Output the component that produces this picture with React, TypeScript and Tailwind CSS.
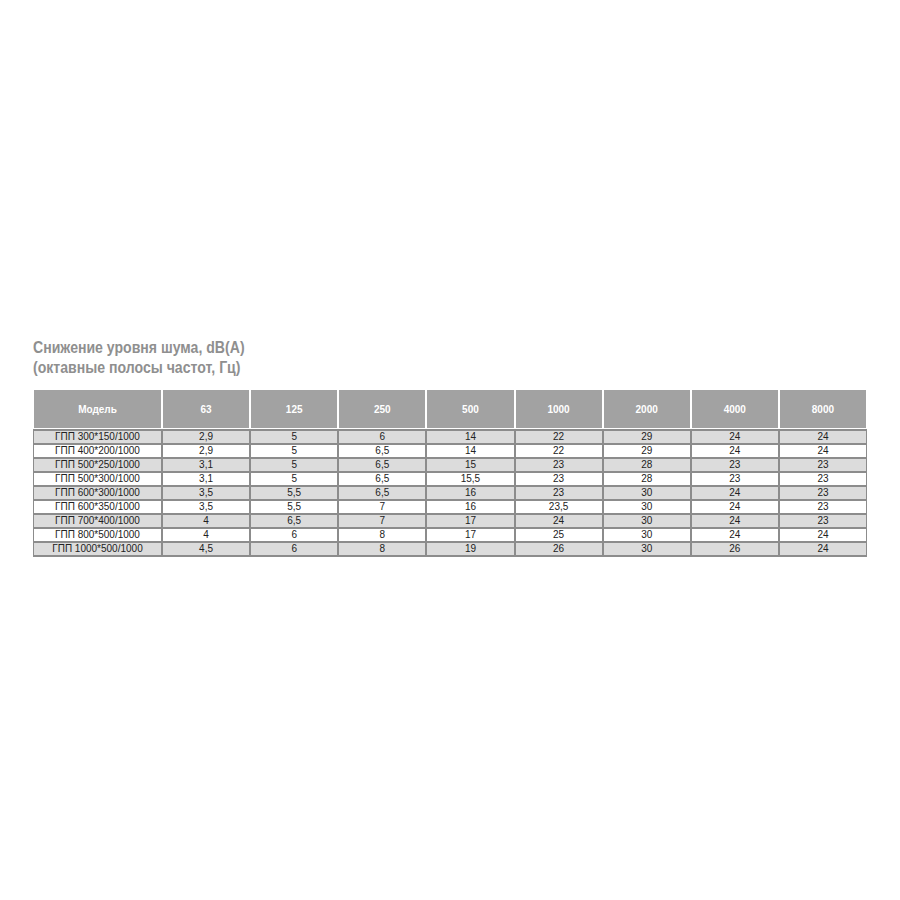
const freqs = ["63", "125", "250", "500", "1000", "2000", "4000", "8000"];

const rows: [string, string[]][] = [
  ["ГПП 300*150/1000", ["2,9", "5", "6", "14", "22", "29", "24", "24"]],
  ["ГПП 400*200/1000", ["2,9", "5", "6,5", "14", "22", "29", "24", "24"]],
  ["ГПП 500*250/1000", ["3,1", "5", "6,5", "15", "23", "28", "23", "23"]],
  ["ГПП 500*300/1000", ["3,1", "5", "6,5", "15,5", "23", "28", "23", "23"]],
  ["ГПП 600*300/1000", ["3,5", "5,5", "6,5", "16", "23", "30", "24", "23"]],
  ["ГПП 600*350/1000", ["3,5", "5,5", "7", "16", "23,5", "30", "24", "23"]],
  ["ГПП 700*400/1000", ["4", "6,5", "7", "17", "24", "30", "24", "23"]],
  ["ГПП 800*500/1000", ["4", "6", "8", "17", "25", "30", "24", "24"]],
  ["ГПП 1000*500/1000", ["4,5", "6", "8", "19", "26", "30", "26", "24"]],
];

export default function App() {
  return (
    <div className="min-h-[900px] w-[900px] bg-white pl-[33px] pt-[338px] font-['Liberation_Sans',Arial,sans-serif]">
      {/* the title in the picture is squeezed sideways */}
      <h2 className="origin-left scale-x-[0.88] text-[16px] font-bold leading-[20px] text-[#8f8f8f] whitespace-nowrap">
        Снижение уровня шума, dB(A)
        <br />
        (октавные полосы частот, Гц)
      </h2>

      <div className="mt-[12px] w-[834px]">
        <div className="grid grid-cols-[127px_repeat(8,1fr)] gap-x-[2px] px-[1px]">
          <div className="flex h-[38px] items-center justify-center bg-[#a2a2a2] text-[10px] font-bold text-white">
            Модель
          </div>
          {freqs.map((f) => (
            <div
              key={f}
              className="flex h-[38px] items-center justify-center bg-[#a2a2a2] text-[10px] font-bold text-white"
            >
              {f}
            </div>
          ))}
        </div>

        <div className="mt-[1px] grid grid-cols-[127px_repeat(8,1fr)] gap-[2px] bg-[#8c8c8c] p-[1px] py-[2px]">
          {rows.map(([model, vals], i) => {
            const bg = i % 2 === 0 ? "bg-[#dcdcdc]" : "bg-white";
            return [model, ...vals].map((v, j) => (
              <div
                key={model + j}
                className={`${bg} h-[12px] text-center text-[10px] leading-[12px] text-[#222]`}
              >
                {v}
              </div>
            ));
          })}
        </div>
      </div>
    </div>
  );
}
